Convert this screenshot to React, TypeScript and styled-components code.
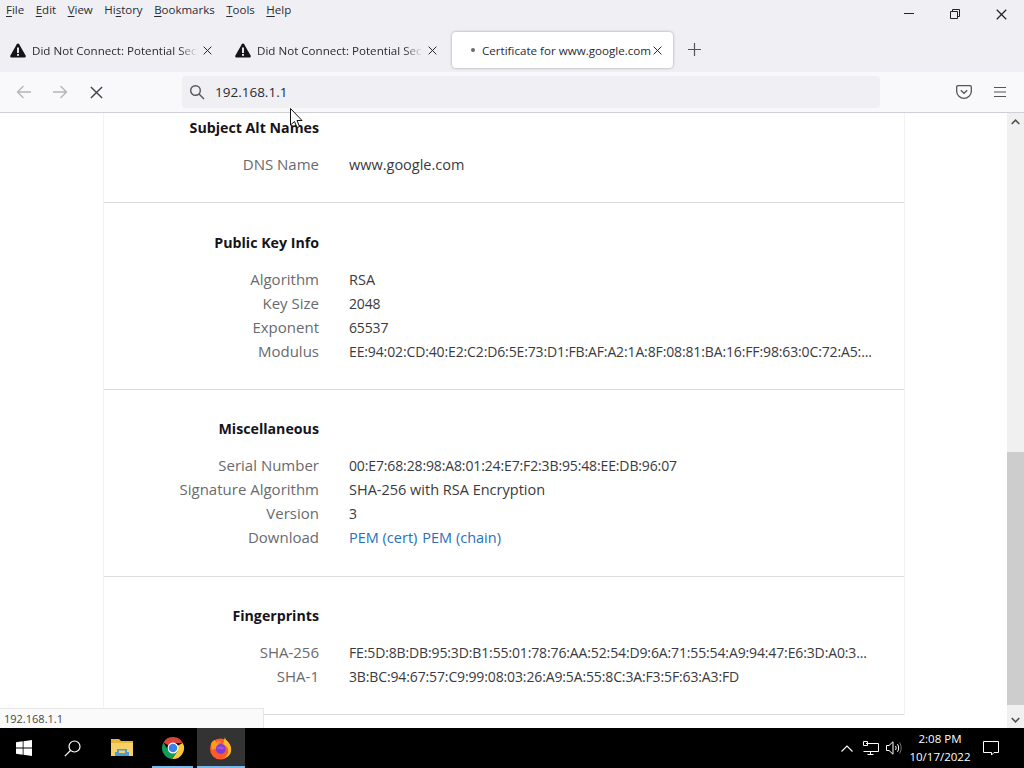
import React from "react";
import styled, { createGlobalStyle } from "styled-components";

const GlobalStyle = createGlobalStyle`
  html, body {
    margin: 0;
    padding: 0;
    height: 100%;
    overflow: hidden;
    background: #fff;
    font-family: "Open Sans", "Noto Sans", sans-serif;
  }
  * { box-sizing: border-box; }
`;

const Screen = styled.div`
  position: relative;
  width: 1024px;
  height: 768px;
  display: flex;
  flex-direction: column;
  overflow: hidden;
`;

const Chrome = styled.div`
  background: #f0f0f4;
  height: 72px;
  display: flex;
  flex-direction: column;
`;

const MenuRow = styled.div`
  height: 32px;
  display: flex;
  justify-content: space-between;
`;

const Menu = styled.div`
  display: flex;
  gap: 11.5px;
  padding: 2px 0 0 6px;
  font-size: 11.5px;
  line-height: 15px;
  color: #2b2a33;
`;

const MenuItem = styled.span`
  u { text-underline-offset: 2px; }
`;

const WindowButtons = styled.div`
  display: flex;
`;

const WindowButton = styled.div`
  width: 46px;
  height: 28px;
  display: flex;
  align-items: center;
  justify-content: center;
  color: #222;
`;

const TabRow = styled.div`
  flex: 1;
  display: flex;
  align-items: flex-start;
  padding-left: 2px;
`;

const Tab = styled.div<{ $active?: boolean }>`
  width: ${(p) => (p.$active ? "221px" : "225px")};
  height: 36px;
  display: flex;
  align-items: center;
  padding-left: ${(p) => (p.$active ? "19px" : "8px")};
  background: ${(p) => (p.$active ? "#fff" : "transparent")};
  border-radius: 4px;
  box-shadow: ${(p) => (p.$active ? "0 0 3px rgba(0,0,0,0.35)" : "none")};
  font-size: 11.6px;
  color: #2b2a33;
`;

const TabTitle = styled.span<{ $fade?: boolean }>`
  width: 171px;
  white-space: nowrap;
  overflow: ${(p) => (p.$fade ? "hidden" : "visible")};
  mask-image: ${(p) =>
    p.$fade ? "linear-gradient(to right, #000 86%, transparent 97%)" : "none"};
`;

const TabClose = styled.span`
  display: flex;
  color: #222;
`;

const TabIcon = styled.span`
  display: flex;
  margin-right: 6px;
`;

const Dot = styled.span`
  width: 4px;
  height: 4px;
  margin-right: 7px;
  border-radius: 50%;
  background: #6b6b70;
`;

const NewTab = styled.div`
  margin: 11px 0 0 15px;
  color: #555;
  display: flex;
`;

const Toolbar = styled.div`
  height: 41px;
  background: #f9f9fb;
  border-bottom: 1px solid #cfcfd8;
  display: flex;
  align-items: center;
  padding: 0 17px 0 15px;
`;

const NavButton = styled.div<{ $dim?: boolean }>`
  width: 18px;
  height: 18px;
  margin-right: 18px;
  display: flex;
  align-items: center;
  justify-content: center;
  color: ${(p) => (p.$dim ? "#b4b4b8" : "#44444a")};
`;

const UrlBar = styled.div`
  width: 698px;
  height: 32px;
  margin-left: 59px;
  background: #f0f0f4;
  border-radius: 4px;
  display: flex;
  align-items: center;
  padding-left: 7px;
  gap: 10px;
  font-size: 13.5px;
  color: #2b2a33;
`;

const ToolbarEnd = styled.div`
  margin-left: auto;
  display: flex;
  gap: 21px;
  color: #55555a;
`;

const Body = styled.div`
  flex: 1;
  min-height: 0;
  display: flex;
`;

const Viewport = styled.div`
  flex: 1;
  overflow: hidden;
  padding-left: 103px;
`;

const Card = styled.div`
  width: 802px;
  margin-top: -25px;
  background: #fff;
  border-left: 1px solid #f2f2f4;
  border-right: 1px solid #f2f2f4;
`;

// the original sections have fractional heights, so the rows snap differently
const Section = styled.section`
  padding: 28px 0 26px;
  border-bottom: 1px solid #dcdce0;
  &:nth-child(3) { padding: 27px 0 27px; }
  &:nth-child(4) { padding: 27px 0 26px; }
`;

const Heading = styled.h2`
  margin: 0 0 12px;
  width: 215px;
  text-align: right;
  font-size: 14.2px;
  line-height: 24px;
  font-weight: 700;
  color: #15141a;
`;

const Row = styled.div`
  display: flex;
  align-items: baseline;
  height: 24px;
  line-height: 24px;
`;

const Label = styled.span`
  width: 215px;
  text-align: right;
  font-size: 15px;
  color: #6a6a6e;
`;

const Value = styled.span<{ $hex?: boolean }>`
  margin-left: 30px;
  font-size: ${(p) => (p.$hex ? "14px" : "14.5px")};
  letter-spacing: ${(p) => (p.$hex ? "-0.13px" : "0")};
  color: #3a3a40;
  white-space: nowrap;
`;

const PemLink = styled.a`
  color: #2a6fb8;
  margin-right: 5px;
`;

const Scrollbar = styled.div`
  width: 17px;
  background: #f0f0f0;
  display: flex;
  flex-direction: column;
`;

const ScrollArrow = styled.div`
  height: 17px;
  display: flex;
  align-items: center;
  justify-content: center;
  color: #505050;
`;

const ScrollSpace = styled.div<{ $grow: number }>`
  flex: ${(p) => p.$grow};
`;

const ScrollThumb = styled.div`
  height: 253px;
  background: #cdcdcd;
`;

const StatusTip = styled.div`
  position: absolute;
  left: 0;
  top: 708px;
  width: 264px;
  height: 20px;
  background: #fafafa;
  border: 1px solid #e6e6e6;
  border-left: none;
  border-bottom: none;
  padding-left: 4px;
  font-size: 11px;
  line-height: 19px;
  color: #45454a;
`;

const Pointer = styled.svg`
  position: absolute;
  left: 290px;
  top: 108px;
`;

const Taskbar = styled.div`
  height: 40px;
  background: #000;
  display: flex;
  align-items: stretch;
  color: #fff;
`;

const TaskButton = styled.div<{ $w: number; $active?: boolean; $running?: number }>`
  position: relative;
  width: ${(p) => p.$w}px;
  display: flex;
  align-items: center;
  justify-content: center;
  background: ${(p) => (p.$active ? "#333" : "transparent")};
  ${(p) =>
    p.$running !== undefined &&
    `&::after {
      content: "";
      position: absolute;
      left: ${p.$running}px;
      right: ${p.$running}px;
      bottom: 0;
      height: 2px;
      background: #76b9ed;
    }`}
`;

const Tray = styled.div`
  margin-left: auto;
  padding-right: 18px;
  display: flex;
  align-items: center;
`;

const TrayIcon = styled.div<{ $w: number }>`
  width: ${(p) => p.$w}px;
  display: flex;
  justify-content: center;
`;

const Clock = styled.div`
  width: 68px;
  margin: 0 2px 0 1px;
  text-align: center;
  font-size: 11.5px;
  line-height: 18px;
  white-space: nowrap;
`;

const Warning = () => (
  <svg width="16" height="15" viewBox="0 0 16 15">
    <path d="M8 .5c-.5 0-.9.3-1.200.8L.4 12.600c-.5 1 .1 2 1.200 2h12.800c1.100 0 1.700-1 1.200-2L9.200 1.300C8.900.8 8.500.5 8 .5z" fill="#15141a" />
    <rect x="7.100" y="4.500" width="1.800" height="5.500" fill="#fff" />
    <rect x="7.100" y="11" width="1.800" height="1.800" fill="#fff" />
  </svg>
);

const Cross = ({ size = 9 }: { size?: number }) => (
  <svg width={size} height={size} viewBox="0 0 10 10" stroke="currentColor" strokeWidth="1.100" fill="none">
    <path d="M.7.7l8.600 8.600M9.300.7L.7 9.300" />
  </svg>
);

const Firefox = () => (
  <svg width="24" height="24" viewBox="0 0 24 24">
    <circle cx="11.500" cy="13" r="10.500" fill="#ff5a2c" />
    <path d="M2 8c1-3 3-4 4-4 0 1 .5 2 1.500 2.500C9 5 11 5 12 6c-2 .5-3 1.500-3 2.500 3-1 7 0 8 3 .5 2-1 5-5 5-3 0-5-2-5.500-4L3 14z" fill="#ff9a1f" />
    <path d="M16 1c0 3 2 3 4.500 7 1.500 2.500 2 5 1.500 7.500-1 4-4 6-7 6.500 3-2 5-5 4-9-.6-2.500-3-4-5-5 .5-2.500 1.500-5 2-7z" fill="#ffbd2e" />
    <circle cx="11.800" cy="13" r="5" fill="#7a3ed6" />
    <path d="M7 12c2-1.500 5-2 7.500-1 .8.500 1 1.200.5 1.800-1 .7-3 .7-4.500.2-1-.3-2.500-.5-3.500-1z" fill="#b14adf" />
  </svg>
);

const Chrome24 = () => (
  <svg width="24" height="24" viewBox="0 0 24 24">
    <path d="M12 12L2.500 6.500A11 11 0 0 1 21.800 7H12z" fill="#db4437" />
    <path d="M12 12L21.800 7A11 11 0 0 1 11 23l5.500-8z" fill="#fcc934" />
    <path d="M12 12l4.500 3L11 23A11 11 0 0 1 2.500 6.500L7.500 15z" fill="#0f9d58" />
    <circle cx="12" cy="12" r="5.500" fill="#fff" />
    <circle cx="12" cy="12" r="4.300" fill="#3b82e8" />
  </svg>
);

const Folder = () => (
  <svg width="22" height="20" viewBox="0 0 22 20">
    <path d="M0 1h8l2 2h12v15H0z" fill="#e8b53f" />
    <path d="M0 5h22v13H0z" fill="#f6d266" />
    <path d="M6 11h10v3h2v4H4v-4h2z" fill="#4f9bd6" />
    <path d="M8 12.500h6V15H8z" fill="#f6d266" />
  </svg>
);

const TABS = ["Did Not Connect: Potential Security Issue", "Did Not Connect: Potential Security Issue"];

const MENU: [string, string][] = [
  ["F", "ile"],
  ["E", "dit"],
  ["V", "iew"],
];

function App() {
  return (
    <Screen>
      <GlobalStyle />
      <Chrome>
        <MenuRow>
          <Menu>
            {MENU.map(([key, rest]) => (
              <MenuItem key={key}>
                <u>{key}</u>
                {rest}
              </MenuItem>
            ))}
            <MenuItem>
              Hi<u>s</u>tory
            </MenuItem>
            <MenuItem>
              <u>B</u>ookmarks
            </MenuItem>
            <MenuItem>
              <u>T</u>ools
            </MenuItem>
            <MenuItem>
              <u>H</u>elp
            </MenuItem>
          </Menu>
          <WindowButtons>
            <WindowButton>
              <svg width="10" height="10" viewBox="0 0 10 10" stroke="currentColor" fill="none">
                <path d="M0 4.500h10" />
              </svg>
            </WindowButton>
            <WindowButton>
              <svg width="10" height="10" viewBox="0 0 10 10" stroke="currentColor" fill="none">
                <path d="M.5 2.500h7v7h-7zM2.500 2.500v-2h7v7h-2" />
              </svg>
            </WindowButton>
            <WindowButton>
              <Cross size={11} />
            </WindowButton>
          </WindowButtons>
        </MenuRow>
        <TabRow>
          {TABS.map((title, i) => (
            <Tab key={i}>
              <TabIcon>
                <Warning />
              </TabIcon>
              <TabTitle $fade>{title}</TabTitle>
              <TabClose>
                <Cross />
              </TabClose>
            </Tab>
          ))}
          <Tab $active>
            <Dot />
            <TabTitle>Certificate for www.google.com</TabTitle>
            <TabClose>
              <Cross />
            </TabClose>
          </Tab>
          <NewTab>
            <svg width="13" height="13" viewBox="0 0 13 13" stroke="currentColor" fill="none" strokeWidth="1.200">
              <path d="M6.500 0v13M0 6.500h13" />
            </svg>
          </NewTab>
        </TabRow>
      </Chrome>
      <Toolbar>
        <NavButton $dim>
          <svg width="16" height="14" viewBox="0 0 16 14" stroke="currentColor" fill="none" strokeWidth="1.300">
            <path d="M15 7H1.500M7.500 1L1.500 7l6 6" />
          </svg>
        </NavButton>
        <NavButton $dim>
          <svg width="16" height="14" viewBox="0 0 16 14" stroke="currentColor" fill="none" strokeWidth="1.300">
            <path d="M1 7h13.500M8.500 1l6 6-6 6" />
          </svg>
        </NavButton>
        <NavButton>
          <Cross size={13} />
        </NavButton>
        <UrlBar>
          <svg width="16" height="16" viewBox="0 0 16 16" stroke="#55555a" fill="none" strokeWidth="1.400">
            <circle cx="6.500" cy="6.500" r="4.800" />
            <path d="M10 10l5 5" />
          </svg>
          192.168.1.1
        </UrlBar>
        <ToolbarEnd>
          <svg width="16" height="14" viewBox="0 0 16 14" stroke="currentColor" fill="none" strokeWidth="1.300">
            <path d="M2 .7h12c.8 0 1.300.5 1.300 1.300v4.500c0 3.500-3.500 6.800-7.300 6.800S.7 10 .7 6.500V2C.7 1.200 1.200.7 2 .7z" />
            <path d="M4.800 5.200L8 8.300l3.200-3.100" />
          </svg>
          <svg width="14" height="14" viewBox="0 0 14 14" stroke="currentColor" fill="none" strokeWidth="1.200">
            <path d="M1 2.500h12M1 7h12M1 11.500h12" />
          </svg>
        </ToolbarEnd>
      </Toolbar>
      <Body>
        <Viewport>
          <Card>
            <Section>
              <Heading>Subject Alt Names</Heading>
              <Row>
                <Label>DNS Name</Label>
                <Value>www.google.com</Value>
              </Row>
            </Section>
            <Section>
              <Heading>Public Key Info</Heading>
              <Row>
                <Label>Algorithm</Label>
                <Value>RSA</Value>
              </Row>
              <Row>
                <Label>Key Size</Label>
                <Value $hex>2048</Value>
              </Row>
              <Row>
                <Label>Exponent</Label>
                <Value $hex>65537</Value>
              </Row>
              <Row>
                <Label>Modulus</Label>
                <Value $hex>EE:94:02:CD:40:E2:C2:D6:5E:73:D1:FB:AF:A2:1A:8F:08:81:BA:16:FF:98:63:0C:72:A5:...</Value>
              </Row>
            </Section>
            <Section>
              <Heading>Miscellaneous</Heading>
              <Row>
                <Label>Serial Number</Label>
                <Value $hex>00:E7:68:28:98:A8:01:24:E7:F2:3B:95:48:EE:DB:96:07</Value>
              </Row>
              <Row>
                <Label>Signature Algorithm</Label>
                <Value>SHA-256 with RSA Encryption</Value>
              </Row>
              <Row>
                <Label>Version</Label>
                <Value $hex>3</Value>
              </Row>
              <Row>
                <Label>Download</Label>
                <Value>
                  <PemLink>PEM (cert)</PemLink>
                  <PemLink>PEM (chain)</PemLink>
                </Value>
              </Row>
            </Section>
            <Section>
              <Heading>Fingerprints</Heading>
              <Row>
                <Label>SHA-256</Label>
                <Value $hex>FE:5D:8B:DB:95:3D:B1:55:01:78:76:AA:52:54:D9:6A:71:55:54:A9:94:47:E6:3D:A0:3...</Value>
              </Row>
              <Row>
                <Label>SHA-1</Label>
                <Value $hex>3B:BC:94:67:57:C9:99:08:03:26:A9:5A:55:8C:3A:F3:5F:63:A3:FD</Value>
              </Row>
            </Section>
          </Card>
        </Viewport>
        <Scrollbar>
          <ScrollArrow>
            <svg width="9" height="6" viewBox="0 0 9 6" stroke="currentColor" fill="none" strokeWidth="1.600">
              <path d="M.7 5l3.800-3.800L8.300 5" />
            </svg>
          </ScrollArrow>
          <ScrollSpace $grow={1} />
          <ScrollThumb />
          <ScrollSpace $grow={0.02} />
          <ScrollArrow>
            <svg width="9" height="6" viewBox="0 0 9 6" stroke="currentColor" fill="none" strokeWidth="1.600">
              <path d="M.7 1l3.800 3.800L8.300 1" />
            </svg>
          </ScrollArrow>
        </Scrollbar>
      </Body>
      <Taskbar>
        <TaskButton $w={48}>
          <svg width="16" height="16" viewBox="0 0 16 16" fill="#fff">
            <path d="M0 2.300l6.700-1v6.300H0zM7.500 1.200L16 0v7.600H7.500zM0 8.400h6.700v6.300l-6.700-1zM7.500 8.400H16V16l-8.500-1.200z" />
          </svg>
        </TaskButton>
        <TaskButton $w={48}>
          <svg width="17" height="17" viewBox="0 0 17 17" stroke="#fff" fill="none" strokeWidth="1.200">
            <circle cx="10.500" cy="6.500" r="5.500" />
            <path d="M6.500 10.500L.8 16.200" />
          </svg>
        </TaskButton>
        <TaskButton $w={52}>
          <Folder />
        </TaskButton>
        <TaskButton $w={49} $running={4}>
          <Chrome24 />
        </TaskButton>
        <TaskButton $w={48} $active $running={0}>
          <Firefox />
        </TaskButton>
        <Tray>
          <TrayIcon $w={24}>
            <svg width="12" height="7" viewBox="0 0 12 7" stroke="#fff" fill="none" strokeWidth="1.100">
              <path d="M.5 6.500L6 1l5.500 5.500" />
            </svg>
          </TrayIcon>
          <TrayIcon $w={24}>
            <svg width="16" height="14" viewBox="0 0 16 14" stroke="#fff" fill="none">
              <path d="M3 2.500h12.500v8H.5M7.500 10.500v3M4.500 13.500h6M.5 .5h4v4h-4z" />
            </svg>
          </TrayIcon>
          <TrayIcon $w={22}>
            <svg width="16" height="14" viewBox="0 0 16 14" stroke="#fff" fill="none">
              <path d="M.5 4.500h2.500L7 .8v12.400L3 9.500H.5zM9.500 5c.8 1.200.8 2.800 0 4M11.500 3.200c1.500 2.200 1.500 5.400 0 7.600" />
              <path d="M13.500 1.500c2.200 3.300 2.200 7.700 0 11" stroke="#777" />
            </svg>
          </TrayIcon>
          <Clock>
            2:08 PM
            <br />
            10/17/2022
          </Clock>
          <TrayIcon $w={30}>
            <svg width="16" height="16" viewBox="0 0 16 16" stroke="#fff" fill="none">
              <path d="M.5 1.500h15v11H11L8.500 15V12.500H.5z" />
            </svg>
          </TrayIcon>
        </Tray>
      </Taskbar>
      <StatusTip>192.168.1.1</StatusTip>
      <Pointer width="13" height="21" viewBox="0 0 13 21">
        <path d="M.5.5v16.500l4-3.500 2.500 6 2.500-1-2.500-6h5z" fill="#fff" stroke="#111" />
      </Pointer>
    </Screen>
  );
}

export default App;
